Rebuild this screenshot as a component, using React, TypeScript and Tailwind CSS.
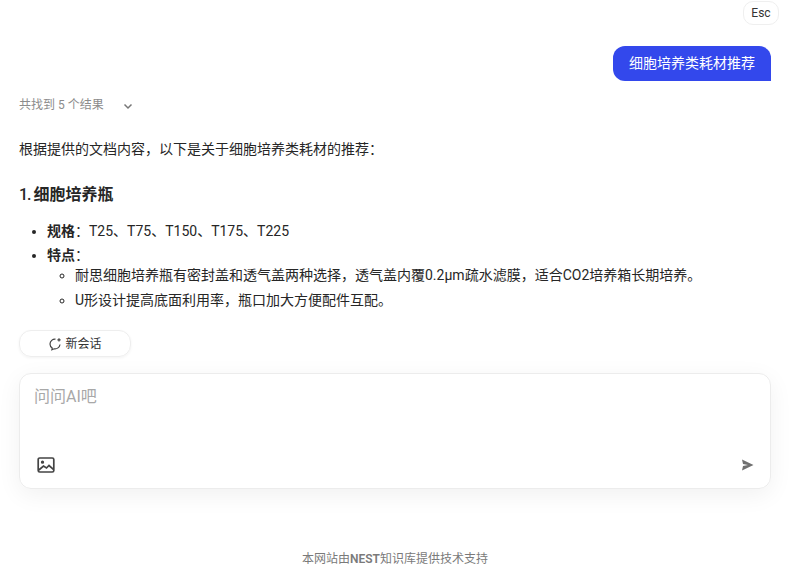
const fontStack = "font-['Roboto','Noto_Sans_CJK_SC',sans-serif]";

const App = () => {
  return (
    <div className={`${fontStack} h-[573px] w-[795px] overflow-hidden bg-white flex flex-col text-[#262626]`}>
      {/* Esc */}
      <div className="flex justify-end pr-[16px] pt-[1px]">
        <div className="h-[24px] w-[36px] rounded-[10px] border border-[#efefef] flex items-center justify-center text-[12px] text-[#333]">
          Esc
        </div>
      </div>

      {/* Messages */}
      <div className="px-[19px] pr-[24px]">
        <div className="flex justify-end mt-[21px]">
          <div className="h-[35px] w-[158px] bg-[#3348ec] text-white text-[14px] rounded-t-[12px] rounded-bl-[12px] flex items-center justify-center">
            细胞培养类耗材推荐
          </div>
        </div>

        <div className="flex items-center h-[20px] mt-[14px] text-[12px] text-[#8c8c8c]">
          <span>共找到 5 个结果</span>
          <svg className="ml-[18px] mt-[2px]" width="12" height="12" viewBox="0 0 12 12" fill="none" stroke="#777" strokeWidth="1.5">
            <path d="M2.5 4.5 6 8l3.5-3.5" />
          </svg>
        </div>

        <p className="mt-[24px] text-[14px] leading-[20px]">根据提供的文档内容，以下是关于细胞培养类耗材的推荐：</p>

        <h3 className="mt-[24px] text-[16px] leading-[24px] font-bold">
          <span className="font-medium tracking-[-1px]">1. </span>细胞培养瓶
        </h3>

        <ul className="mt-[14px] ml-[28px] text-[14px] leading-[20px] list-disc">
          <li>
            <strong>规格</strong>：T25、T75、T150、T175、T225
          </li>
          <li className="mt-[4px]">
            <strong>特点</strong>：
            <ul className="ml-[28px] list-[circle]">
              <li>耐思细胞培养瓶有密封盖和透气盖两种选择，透气盖内覆0.2μm疏水滤膜，适合CO2培养箱长期培养。</li>
              <li className="mt-[5px]">U形设计提高底面利用率，瓶口加大方便配件互配。</li>
            </ul>
          </li>
        </ul>

        {/* New chat */}
        <button className="mt-[20px] h-[27px] w-[112px] rounded-[12px] border border-[#eeeeee] shadow-[0_1px_3px_rgba(0,0,0,0.05)] flex items-center justify-center gap-[3px] text-[12px] text-[#333]">
          <svg width="14" height="14" viewBox="0 0 14 14" fill="none" stroke="#444" strokeWidth="1.2">
            <path d="M7.5 2.2A5 5 0 0 0 2 7a5 5 0 0 0 2.2 4.1l-.3 1.7 2.3-1A5 5 0 0 0 12 7.5" />
            <path d="M11 1.2v3.2M9.4 2.8h3.2" />
          </svg>
          新会话
        </button>

        {/* Input */}
        <div className="mt-[16px] h-[116px] rounded-[12px] border border-[#ececec] shadow-[0_6px_24px_rgba(0,0,0,0.06)] flex flex-col justify-between pl-[14px] pr-[16px] pt-[12px] pb-[14px]">
          <div className="text-[16px] leading-[22px] text-[#a8a8a8]">问问AI吧</div>
          <div className="flex items-center justify-between">
            <svg className="ml-[3px]" width="18" height="18" viewBox="0 0 18 18" fill="none" stroke="#444" strokeWidth="1.7">
              <rect x="1.2" y="2" width="15.6" height="14" rx="1.5" />
              <path d="m1.8 14 4.7-4 3 2 2.5-2.5 4.4 3.8" />
              <circle cx="5.5" cy="6.2" r="0.8" fill="#444" />
            </svg>
            <svg width="13" height="12" viewBox="0 0 13 12" fill="#707070">
              <path d="M1 .5 12.5 6 1 11.5l1-4.5 5-1-5-1z" />
            </svg>
          </div>
        </div>
      </div>

      {/* Footer */}
      <div className="mt-[60px] pr-[5px] text-center text-[12px] leading-[20px] text-[#7a7a7a]">
        本网站由<strong className="font-semibold">NEST</strong>知识库提供技术支持
      </div>
    </div>
  );
};

export default App;
